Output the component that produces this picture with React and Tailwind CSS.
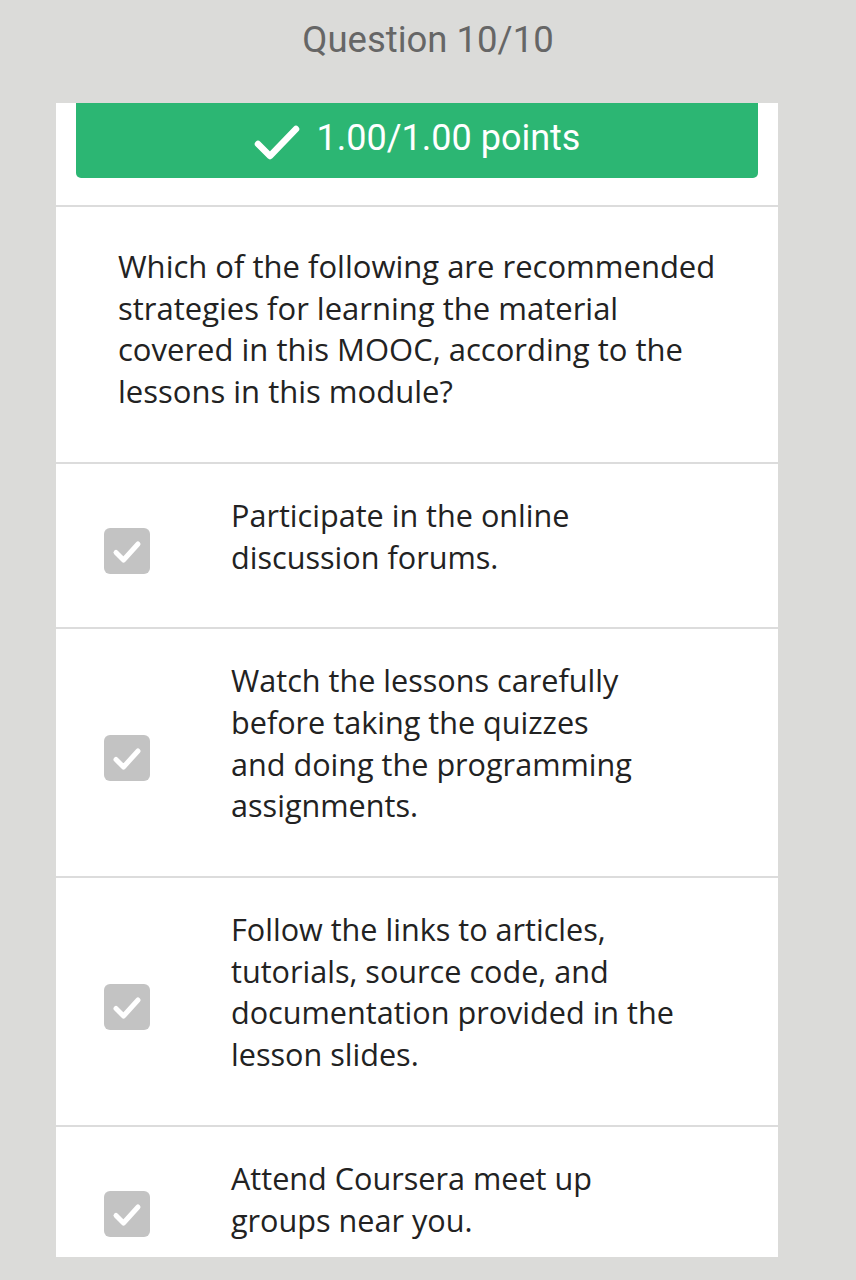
import React from 'react';

const options = [
  ['Participate in the online', 'discussion forums.'],
  ['Watch the lessons carefully', 'before taking the quizzes', 'and doing the programming', 'assignments.'],
  ['Follow the links to articles,', 'tutorials, source code, and', 'documentation provided in the', 'lesson slides.'],
  ['Attend Coursera meet up', 'groups near you.'],
];

const CheckBox = () => (
  <div className="w-[46px] h-[46px] rounded-[6px] bg-[#c3c3c3] flex items-center justify-center shrink-0 mt-[29px]">
    <svg width="34" height="34" viewBox="0 0 34 34" fill="none">
      <path d="M6 18.5 L13.5 26 L28 10" stroke="white" strokeWidth="5" strokeLinecap="round" strokeLinejoin="round" />
    </svg>
  </div>
);

const App = () => {
  return (
    <div className="w-[856px] h-[1280px] bg-[#dbdbd9] overflow-hidden" style={{ fontFamily: '"Open Sans", sans-serif' }}>
      {/* Header */}
      <div className="h-[103px] pt-[15px] text-center text-[36.5px] leading-[50px] text-[#666666]" style={{ fontFamily: 'Roboto, sans-serif' }}>
        Question 10/10
      </div>

      <div className="ml-[56px] w-[722px] bg-white">
        {/* Score banner */}
        <div className="px-[20px] pb-[27px] border-b-2 border-[#dcdcdc]">
          <div className="h-[75px] bg-[#2cb673] rounded-b-[5px] flex items-center justify-center gap-[17px] text-white text-[36px]" style={{ fontFamily: 'Roboto, sans-serif' }}>
            <svg width="46" height="38" viewBox="0 0 46 38" fill="none" className="mt-[4px]">
              <path d="M4 20 L16 32 L42 5" stroke="white" strokeWidth="6.5" strokeLinecap="round" strokeLinejoin="round" />
            </svg>
            <span className="leading-none mb-[5px]">1.00/1.00 points</span>
          </div>
        </div>

        {/* Question */}
        <div className="pl-[62px] pr-[30px] pt-[39px] pb-[49px] border-b-2 border-[#dcdcdc] text-[31px] leading-[41.7px] text-[#222222]">
          <p>Which of the following are recommended</p>
          <p>strategies for learning the material</p>
          <p>covered in this MOOC, according to the</p>
          <p>lessons in this module?</p>
        </div>

        {/* Options */}
        {options.map((lines, i) => (
          <div
            key={i}
            className={
              i === options.length - 1
                ? 'h-[130px] overflow-hidden'
                : 'border-b-2 border-[#dcdcdc]'
            }
          >
            <div className="flex items-center pt-[31px] pb-[49px] pl-[48px]">
              <CheckBox />
              <div className="ml-[81px] text-[30.6px] leading-[41.7px] text-[#222222]">
                {lines.map((l, j) => (
                  <p key={j}>{l}</p>
                ))}
              </div>
            </div>
          </div>
        ))}
      </div>
    </div>
  );
};

export default App;
